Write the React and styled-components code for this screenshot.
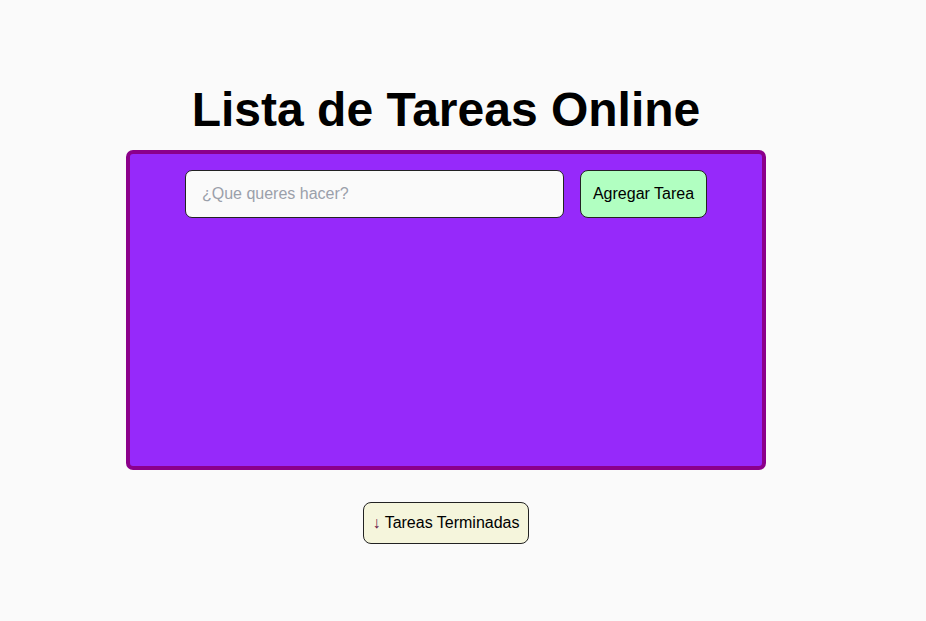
import React, { useState } from "react";
import styled, { createGlobalStyle } from "styled-components";

const Global = createGlobalStyle`
  html, body { margin: 0; padding: 0; background: #fafafa; }
  body { font-family: "Liberation Sans", Arial, sans-serif; }
`;

const Page = styled.div`
  display: flex;
  flex-direction: column;
  align-items: center;
  width: 640px;
  margin-left: 126px;
  padding-top: 82px;
`;

const Title = styled.h1`
  margin: 0 0 13px;
  font-size: 48px;
  line-height: 55px;
  font-weight: 700;
  color: #000;
`;

const Panel = styled.div`
  box-sizing: border-box;
  width: 640px;
  height: 320px;
  background: #9629fa;
  border: 4px solid #8b008b;
  border-radius: 7px;
  padding-top: 16px;
  display: flex;
  flex-direction: column;
  align-items: center;
`;

const Row = styled.form`
  display: flex;
  gap: 16px;
`;

const Input = styled.input`
  box-sizing: border-box;
  width: 379px;
  height: 48px;
  padding: 0 16px;
  border: 1px solid #222;
  border-radius: 7px;
  background: #fafafa;
  font-family: "Liberation Sans", Arial, sans-serif;
  font-size: 16px;
  color: #222;
  outline: none;
  &::placeholder { color: #9aa0aa; }
`;

const Button = styled.button`
  box-sizing: border-box;
  height: ${(p) => p.$h}px;
  padding: 0 ${(p) => p.$px}px;
  border: 1px solid #222;
  border-radius: 8px;
  background: ${(p) => p.$bg};
  font-family: "Liberation Sans", Arial, sans-serif;
  font-size: 16px;
  color: #000;
  cursor: pointer;
`;

const Arrow = styled.span`
  color: #6a1848;
`;

const Footer = styled.div`
  margin-top: 32px;
`;

export default function App() {
  const [value, setValue] = useState("");
  return (
    <>
      <Global />
      <Page>
        <Title>Lista de Tareas Online</Title>
        <Panel>
          <Row onSubmit={(e) => e.preventDefault()}>
            <Input
              placeholder="¿Que queres hacer?"
              value={value}
              onChange={(e) => setValue(e.target.value)}
            />
            <Button type="submit" $h={48} $px={12} $bg="#b1ffc1">
              Agregar Tarea
            </Button>
          </Row>
        </Panel>
        <Footer>
          <Button $h={42} $px={8} $bg="#f5f5dc">
            <Arrow>↓</Arrow> Tareas Terminadas
          </Button>
        </Footer>
      </Page>
    </>
  );
}
